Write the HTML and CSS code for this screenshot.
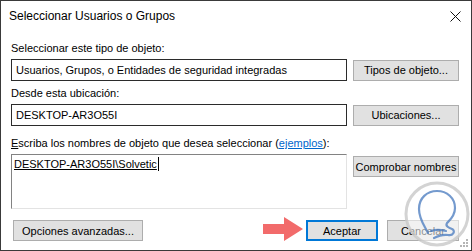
FILE: index.html
```html
<!DOCTYPE html>
<html lang="es">

<head>
    <meta charset="UTF-8">
    <meta name="viewport" content="width=device-width, initial-scale=1.0">
    <title>Seleccionar Usuarios o Grupos</title>
    <link rel="stylesheet" href="styles.css">
</head>

<body>
    <div class="dialog">
        <div class="titlebar">
            <span class="title">Seleccionar Usuarios o Grupos</span>
            <svg class="close" width="11" height="11" viewBox="0 0 11 11">
                <path d="M0.5 0.5 L10.5 10.5 M10.5 0.5 L0.5 10.5" stroke="#111" stroke-width="1" fill="none" />
            </svg>
        </div>
        <div class="content">
            <div class="label first">Seleccionar este tipo de objeto:</div>
            <div class="row">
                <div class="field">Usuarios, Grupos, o Entidades de seguridad integradas</div>
                <div class="btn side">Tipos de objeto...</div>
            </div>
            <div class="label second">Desde esta ubicación:</div>
            <div class="row">
                <div class="field">DESKTOP-AR3O55I</div>
                <div class="btn side">Ubicaciones...</div>
            </div>
            <div class="label third"><u>E</u>scriba los nombres de objeto que desea seleccionar (<a class="link">ejemplos</a>):</div>
            <div class="row names">
                <div class="area"><span class="typed">DESKTOP-AR3O55I\Solvetic</span><span class="caret"></span></div>
                <div class="btn side check">Comprobar nombres</div>
            </div>
            <div class="footer">
                <div class="btn advanced">Opciones avanzadas...</div>
                <div class="actions">
                    <div class="btn ok">Aceptar</div>
                    <div class="btn">Cancelar</div>
                </div>
            </div>
        </div>

        <!-- flecha roja encima del botón Aceptar -->
        <svg class="arrow" width="40" height="24" viewBox="0 0 40 24">
            <path d="M0 7 H21 V0 L40 12 L21 24 V17 H0 Z" fill="#f26b6b" />
        </svg>

        <!-- marca de agua -->
        <svg class="mark" width="66" height="66" viewBox="0 0 66 66">
            <circle cx="33" cy="33" r="31" fill="rgba(255,255,255,0.55)" stroke="rgba(200,200,200,0.8)" stroke-width="3" />
            <path d="M24 52 C20 44 15 38 15 28 C15 17 23 10 33 10 C43 10 51 17 51 27 C51 35 46 39 43 42 C41 45 45 47 48 48 C52 50 49 55 44 54 C38 53 34 55 30 57 M27 50 C33 48 38 49 42 50"
                fill="none" stroke="rgba(70,120,190,0.75)" stroke-width="2.2" stroke-linecap="round" />
        </svg>

        <div class="grip">
            <i></i><i></i><i></i><i></i><i></i><i></i>
        </div>
    </div>
</body>

</html>
```

FILE: styles.css
```css
* {
    margin: 0;
    padding: 0;
    box-sizing: border-box;
}

body {
    font-family: "Liberation Sans", Arial, sans-serif;
    font-size: 11px;
    color: #000;
    background: #fff;
}

.dialog {
    width: 472px;
    height: 251px;
    border: 1px solid #3a3a3a;
    background: #fff;
    display: flex;
    flex-direction: column;
    position: relative;
    overflow: hidden;
}

.titlebar {
    height: 30px;
    padding: 0 10px 0 8px;
    display: flex;
    align-items: center;
    justify-content: space-between;
}

.title {
    font-size: 12px;
    color: #000;
}

.content {
    padding: 0 12px 0 10px;
    display: flex;
    flex-direction: column;
}

.label {
    height: 13px;
    line-height: 13px;
    white-space: nowrap;
}

.label.first {
    margin-top: 11px;
}

.label.second {
    margin-top: 6px;
}

.label.third {
    margin-top: 11px;
}

.link {
    color: #0066cc;
    text-decoration: underline;
}

.row {
    display: flex;
    align-items: center;
    gap: 6px;
    margin-top: 4px;
}

.field {
    flex: 1;
    height: 22px;
    border: 1px solid #2b2b2b;
    background: #fff;
    padding: 0 4px;
    line-height: 20px;
    white-space: nowrap;
    overflow: hidden;
}

.btn {
    height: 21px;
    width: 72px;
    background: #e1e1e1;
    border: 1px solid #adadad;
    display: flex;
    align-items: center;
    justify-content: center;
    white-space: nowrap;
}

.btn.side {
    width: 106px;
}

.names {
    align-items: flex-start;
}

.area {
    flex: 1;
    height: 55px;
    background: #fff;
    border-top: 1px solid #828282;
    border-left: 1px solid #828282;
    border-right: 1px solid #e3e3e3;
    border-bottom: 1px solid #e3e3e3;
    padding: 2px 2px;
    line-height: 14px;
    display: flex;
    align-items: flex-start;
}

.typed {
    text-decoration: underline;
}

.caret {
    display: inline-block;
    width: 1px;
    height: 14px;
    background: #000;
    margin-left: 1px;
}

.check {
    margin-top: 2px;
}

.footer {
    margin-top: 11px;
    display: flex;
    justify-content: space-between;
    align-items: center;
    padding-left: 2px;
}

.advanced {
    width: 130px;
}

.actions {
    display: flex;
    gap: 9px;
}

.ok {
    border: 2px solid #0078d7;
}

.arrow {
    position: absolute;
    left: 262px;
    top: 216px;
}

.mark {
    position: absolute;
    left: 403px;
    top: 180px;
}

.grip {
    position: absolute;
    right: 3px;
    bottom: 3px;
    width: 9px;
    height: 9px;
}

.grip i {
    position: absolute;
    width: 2px;
    height: 2px;
    background: #b5b5b5;
}

.grip i:nth-child(1) { right: 0; bottom: 0; }
.grip i:nth-child(2) { right: 3px; bottom: 0; }
.grip i:nth-child(3) { right: 6px; bottom: 0; }
.grip i:nth-child(4) { right: 0; bottom: 3px; }
.grip i:nth-child(5) { right: 3px; bottom: 3px; }
.grip i:nth-child(6) { right: 0; bottom: 6px; }
```
